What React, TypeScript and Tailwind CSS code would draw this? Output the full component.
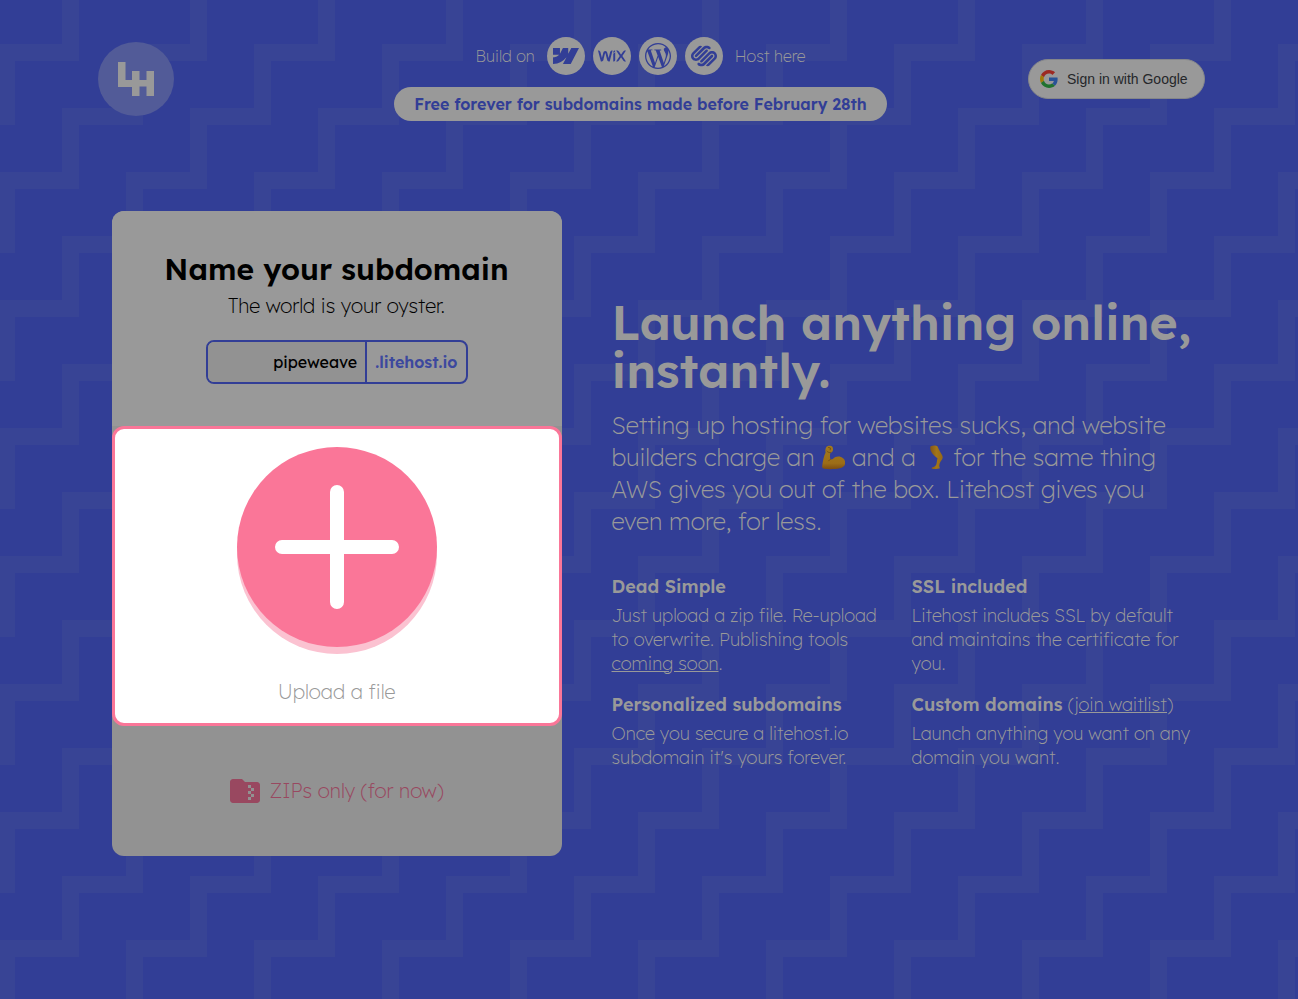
import { useState } from "react";
import { FaWix } from "react-icons/fa";
import { SiSquarespace, SiWebflow, SiWordpress } from "react-icons/si";
import { MdFolderZip } from "react-icons/md";

const builders = [
  { name: "Webflow", Icon: SiWebflow, size: 26 },
  { name: "Wix", Icon: FaWix, size: 28 },
  { name: "WordPress", Icon: SiWordpress, size: 26 },
  { name: "Squarespace", Icon: SiSquarespace, size: 26 },
];

function StepPattern() {
  return (
    <svg aria-hidden="true" className="absolute inset-0 h-full w-full">
      <defs>
        <pattern id="steps" x="-2" y="44" width="128" height="128" patternUnits="userSpaceOnUse">
          <path
            fill="#384495"
            d="M0 0H81V17H17V81H0ZM64 64H128V81H81V128H64ZM0 64H17V81H0Z"
          />
        </pattern>
      </defs>
      <rect width="100%" height="100%" fill="url(#steps)" />
    </svg>
  );
}

function Logo() {
  return (
    <svg viewBox="0 0 76 74" className="h-[74px] w-[76px]" role="img" aria-label="Litehost">
      <ellipse cx="38" cy="37" rx="38" ry="37" fill="#525b98" />
      <path
        fill="#999999"
        d="M20 20H27.5V38H34V29H41.5V38H48.5V29H56V54H48.5V44.500H41.500V54H34V45H20Z"
      />
    </svg>
  );
}

function GoogleMark() {
  return (
    <svg viewBox="0 0 48 48" className="size-[18px]" aria-hidden="true">
      <path fill="#9c2a23" d="M24 9.500c3.540 0 6.710 1.220 9.210 3.600l6.850-6.850C35.900 2.380 30.470 0 24 0 14.620 0 6.510 5.380 2.560 13.220l7.980 6.190C12.430 13.720 17.740 9.500 24 9.500z" />
      <path fill="#285297" d="M46.980 24.550c0-1.570-.15-3.090-.38-4.550H24v9.020h12.940c-.58 2.960-2.260 5.480-4.780 7.180l7.730 6c4.510-4.180 7.090-10.360 7.090-17.650z" />
      <path fill="#a17a08" d="M10.530 28.590c-.48-1.450-.76-2.990-.76-4.590s.27-3.140.76-4.590l-7.980-6.190C.92 16.460 0 20.120 0 24c0 3.880.92 7.540 2.560 10.780l7.970-6.190z" />
      <path fill="#20722f" d="M24 48c6.480 0 11.930-2.130 15.890-5.810l-7.730-6c-2.150 1.450-4.920 2.300-8.160 2.300-6.260 0-11.570-4.220-13.470-9.910l-7.980 6.190C6.510 42.620 14.620 48 24 48z" />
    </svg>
  );
}

function ArmEmoji() {
  return (
    <svg viewBox="1 0 24 26" className="inline-block h-[26px] w-6 align-[-4px]" role="img" aria-label="arm">
      <defs>
        <linearGradient id="arm" x1="0" y1="0" x2="0" y2="1">
          <stop offset="0" stopColor="#a27a1c" />
          <stop offset="0.75" stopColor="#9c6d17" />
          <stop offset="1" stopColor="#7c4c12" />
        </linearGradient>
      </defs>
      <path
        fill="url(#arm)"
        d="M6.200 3.200C7 1.800 9.500 1.300 11.300 2c1.400.6 1.900 2.300 1.700 4.100-.2 1.700-1.300 2.500-2.700 2.900-.5 2.500-.5 4.700.2 6.300 1 .3 1.900.1 2.600-.5 1.700-1.800 4-2.700 6.500-2.200 3.300.6 5.500 3.200 5.600 6.100.1 3-2.100 4.900-5.400 5.600-5 1-11.500 1.200-15.800.4-1.500-.3-2-1.200-1.800-2.700.6-4.700 1.500-9.600 3.400-13.500-.4-1.800-.3-3.900.6-5.300Z"
      />
      <path fill="none" stroke="#704713" strokeWidth="0.800" strokeLinecap="round" d="M7 7.200c1.200 1.300 2.300 1.500 3.500 1.300M8.500 3.500l2 .5-.3 1.800M10.500 15.300c-.8.300-1.500.8-1.900 1.500" />
    </svg>
  );
}

function LegEmoji() {
  return (
    <svg viewBox="1 0 24 26" className="inline-block h-[26px] w-6 align-[-4px]" role="img" aria-label="leg">
      <defs>
        <linearGradient id="leg" x1="0" y1="0" x2="1" y2="0">
          <stop offset="0" stopColor="#82551a" />
          <stop offset="0.500" stopColor="#a27617" />
          <stop offset="1" stopColor="#966916" />
        </linearGradient>
      </defs>
      <path
        fill="url(#leg)"
        d="M8.500 2.300C11 1 14.400 1.200 15.600 2.400c.8 2.400 1.800 4.400 3.200 6.600 1 1.600 2 3 1.900 4.500-.1 1.800-1.700 3.100-2.400 4.600-.8 1.700-1.200 3.300-1 4.500.5.700.6 1.500.3 2-2.200.5-5.600.5-7.600.1-.6-.5-.3-1.100.5-1.400 1.900-.5 3.200-1.500 3.800-2.900.7-2.100.7-4.300 1.200-6.100-2.600-1.900-5.300-4.300-6.500-7C8.300 5.700 7.900 3.700 8.500 2.300Z"
      />
    </svg>
  );
}

function Header() {
  return (
    <header className="grid grid-cols-[1fr_auto_1fr] items-center pt-[37px] pr-[93px] pl-[76px]">
      <a href="#home" className="ml-[22px] justify-self-start">
        <Logo />
      </a>
      <div className="flex flex-col items-center gap-3">
        <div className="flex items-center gap-3 text-base font-extralight">
          <span>Build on</span>
          <ul className="flex gap-2">
            {builders.map(({ name, Icon, size }) => (
              <li
                key={name}
                aria-label={name}
                className="flex size-[38px] items-center justify-center rounded-full bg-[#999999] text-[#323e96]"
              >
                <Icon size={size} />
              </li>
            ))}
          </ul>
          <span>Host here</span>
        </div>
        <p className="rounded-full bg-[#999999] px-5 py-[5px] text-base leading-6 font-semibold text-[#323e96]">
          Free forever for subdomains made before February 28th
        </p>
      </div>
      <button
        type="button"
        className="flex h-10 w-[177px] items-center gap-[9px] justify-self-end rounded-full border border-[#84868a] bg-[#999999] px-[11px] font-['Liberation_Sans',Arial,sans-serif] text-sm whitespace-nowrap text-[#25272a]"
      >
        <GoogleMark />
        Sign in with Google
      </button>
    </header>
  );
}

function SubdomainCard() {
  const [name, setName] = useState("pipeweave");
  return (
    <section className="w-[450px] shrink-0 overflow-hidden rounded-xl bg-[#929292] text-center text-black">
      <div className="flex flex-col items-center bg-[#999999] pt-[38px] pb-[42px]">
        <h2 className="text-3xl leading-10 font-semibold">Name your subdomain</h2>
        <p className="mt-[3px] text-xl leading-7 font-extralight">The world is your oyster.</p>
        <div className="mt-5 flex h-11 w-[262px] overflow-hidden rounded-lg border-2 border-[#323e96]">
          <input
            aria-label="Subdomain"
            value={name}
            onChange={(e) => setName(e.target.value)}
            className="w-0 grow bg-[#929292] px-2 text-right text-base outline-none"
          />
          <span className="flex items-center border-l-2 border-[#323e96] px-2 text-base font-semibold text-[#3c489e]">
            .litehost.io
          </span>
        </div>
      </div>
      <button
        type="button"
        className="flex h-[300px] w-full flex-col items-center rounded-xl border-3 border-[#fa7698] bg-white pt-[18px] text-xl font-extralight text-[#999999]"
      >
        <svg viewBox="0 0 200 207" className="h-[207px] w-[200px]" aria-hidden="true">
          <circle cx="100" cy="107" r="100" fill="#fbc2d1" />
          <circle cx="100" cy="100" r="100" fill="#fa7698" />
          <path d="M100 45V155M45 100H155" stroke="white" strokeWidth="14" strokeLinecap="round" />
        </svg>
        <span className="mt-6 leading-7">Upload a file</span>
      </button>
      <p className="flex h-[130px] items-center justify-center gap-1.5 pr-0.5 text-xl font-extralight text-[#994860]">
        <MdFolderZip size={36} />
        ZIPs only (for now)
      </p>
    </section>
  );
}

function Pitch() {
  return (
    <section className="w-[575px] shrink-0">
      <h1 className="text-5xl leading-12 font-semibold whitespace-nowrap">
        Launch anything online,
        <br />
        instantly.
      </h1>
      <p className="mt-[15px] text-2xl leading-8 font-extralight">
        Setting up hosting for websites sucks, and website
        <br />
        builders charge an <ArmEmoji /> and a <LegEmoji /> for the same thing
        <br />
        AWS gives you out of the box. Litehost gives you
        <br />
        even more, for less.
      </p>
      <div className="mt-[38px] grid grid-cols-2 gap-x-[25px] gap-y-[17px] text-lg leading-6 font-extralight whitespace-nowrap">
        <div>
          <h3 className="mb-[5px] font-semibold">Dead Simple</h3>
          <p>
            Just upload a zip file. Re-upload
            <br />
            to overwrite. Publishing tools
            <br />
            <a href="#soon" className="underline">coming soon</a>.
          </p>
        </div>
        <div>
          <h3 className="mb-[5px] font-semibold">SSL included</h3>
          <p>
            Litehost includes SSL by default
            <br />
            and maintains the certificate for
            <br />
            you.
          </p>
        </div>
        <div>
          <h3 className="mb-[5px] font-semibold">Personalized subdomains</h3>
          <p>
            Once you secure a litehost.io
            <br />
            subdomain it's yours forever.
          </p>
        </div>
        <div>
          <h3 className="mb-[5px] font-semibold">
            Custom domains{" "}
            <a href="#waitlist" className="font-extralight underline">(join waitlist)</a>
          </h3>
          <p>
            Launch anything you want on any
            <br />
            domain you want.
          </p>
        </div>
      </div>
    </section>
  );
}

export default function App() {
  return (
    <div className="relative min-h-screen overflow-x-hidden bg-[#323e96] font-['Lexend','Lexend_Deca',Inter,sans-serif] text-[#999999]">
      <StepPattern />
      <div className="relative">
        <Header />
        <main className="flex items-center justify-center gap-[50px] pt-[90px] pb-[143px]">
          <SubdomainCard />
          <Pitch />
        </main>
      </div>
    </div>
  );
}
